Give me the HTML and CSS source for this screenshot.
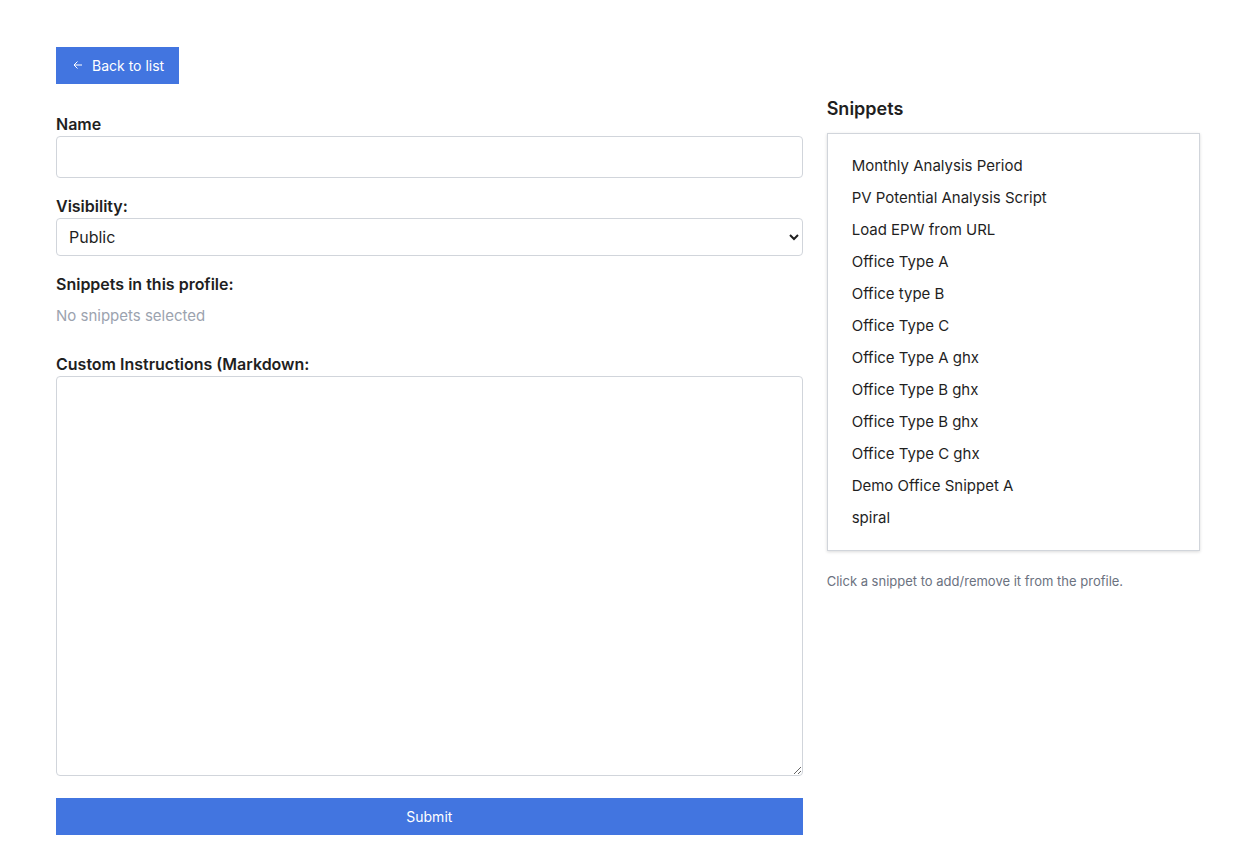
FILE: index.html
```html
<!DOCTYPE html>
<html lang="en">

<head>
    <meta charset="UTF-8">
    <meta name="viewport" content="width=device-width, initial-scale=1.0">
    <title>Edit Profile</title>
    <link rel="stylesheet" href="styles.css">
</head>

<body>
    <div class="main-container">
        <div class="profile">
            <button type="button" class="btn back-btn">
                <svg width="12" height="12" viewBox="0 0 12 12" aria-hidden="true">
                    <path d="M10 5H2M5.5 1.5L2 5l3.5 3.5" />
                </svg>
                Back to list
            </button>

            <form id="profile-form">
                <div class="form-group">
                    <label for="name">Name</label>
                    <input type="text" id="name" name="name">
                </div>
                <div class="form-group">
                    <label for="visibility">Visibility:</label>
                    <select id="visibility" name="visibility">
                        <option>Public</option>
                        <option>Private</option>
                    </select>
                </div>
                <div class="form-group selected-snippets">
                    <h3>Snippets in this profile:</h3>
                    <p class="empty">No snippets selected</p>
                </div>
                <div class="form-group">
                    <label for="instructions">Custom Instructions (Markdown:</label>
                    <textarea id="instructions" name="instructions"></textarea>
                </div>
                <button type="submit" class="btn submit-btn">Submit</button>
            </form>
        </div>

        <div class="snippets">
            <h2>Snippets</h2>
            <ul class="snippet-list">
                <li>Monthly Analysis Period</li>
                <li>PV Potential Analysis Script</li>
                <li>Load EPW from URL</li>
                <li>Office Type A</li>
                <li>Office type B</li>
                <li>Office Type C</li>
                <li>Office Type A ghx</li>
                <li>Office Type B ghx</li>
                <li>Office Type B ghx</li>
                <li>Office Type C ghx</li>
                <li>Demo Office Snippet A</li>
                <li>spiral</li>
            </ul>
            <p class="hint">Click a snippet to add/remove it from the profile.</p>
        </div>
    </div>
</body>

</html>
```

FILE: styles.css
```css
* {
    box-sizing: border-box;
}

body {
    margin: 0;
    background-color: #fff;
    color: #1f1f1f;
    font-family: Inter, "Liberation Sans", sans-serif;
    font-size: 15px;
    line-height: 24px;
}

h2,
h3,
p,
ul {
    margin: 0;
    padding: 0;
}

/* Form on the left, snippet picker on the right */
.main-container {
    display: grid;
    grid-template-columns: 2fr 1fr;
    gap: 24px;
    padding: 47px 54px 20px 56px;
}

/* Buttons */
.btn {
    display: flex;
    align-items: center;
    justify-content: center;
    height: 37px;
    padding: 0 16px;
    border: none;
    background-color: #4275e0;
    color: #fff;
    font-family: inherit;
    font-size: 14px;
    cursor: pointer;
}

.back-btn {
    gap: 8px;
    padding: 0 15px 0 16px;
    margin-bottom: 28px;
}

.back-btn svg {
    fill: none;
    stroke: #fff;
    stroke-width: 1;
}

.submit-btn {
    width: 100%;
}

/* Form fields */
.form-group {
    margin-bottom: 16px;
}

.form-group:last-of-type {
    margin-bottom: 22px;
}

label,
h3 {
    display: block;
    font-size: 16px;
    font-weight: 600;
}

input,
select,
textarea {
    display: block;
    width: 100%;
    border: 1px solid #d1d5db;
    border-radius: 4px;
    background-color: #fff;
    color: inherit;
    font-family: inherit;
    font-size: 16px;
}

input {
    height: 42px;
    padding: 8px 12px;
}

select {
    height: 38px;
    padding: 0 8px;
}

textarea {
    height: 400px;
    padding: 8px 12px;
    resize: vertical;
}

.selected-snippets {
    margin-bottom: 24px;
}

.empty {
    margin-top: 8px;
    color: #9ca3af;
}

/* Snippet picker */
.snippets {
    padding-top: 48px;
}

h2 {
    margin-bottom: 10px;
    font-size: 18px;
    font-weight: 600;
    line-height: 28px;
}

.snippet-list {
    padding: 16px 24px;
    border: 1px solid #d1d5db;
    box-shadow: 0 1px 3px rgba(0, 0, 0, 0.15);
    list-style: none;
}

.snippet-list li {
    padding: 4px 0;
    cursor: pointer;
}

.hint {
    margin-top: 20px;
    color: #6b7280;
    font-size: 13px;
    line-height: 20px;
}
```
